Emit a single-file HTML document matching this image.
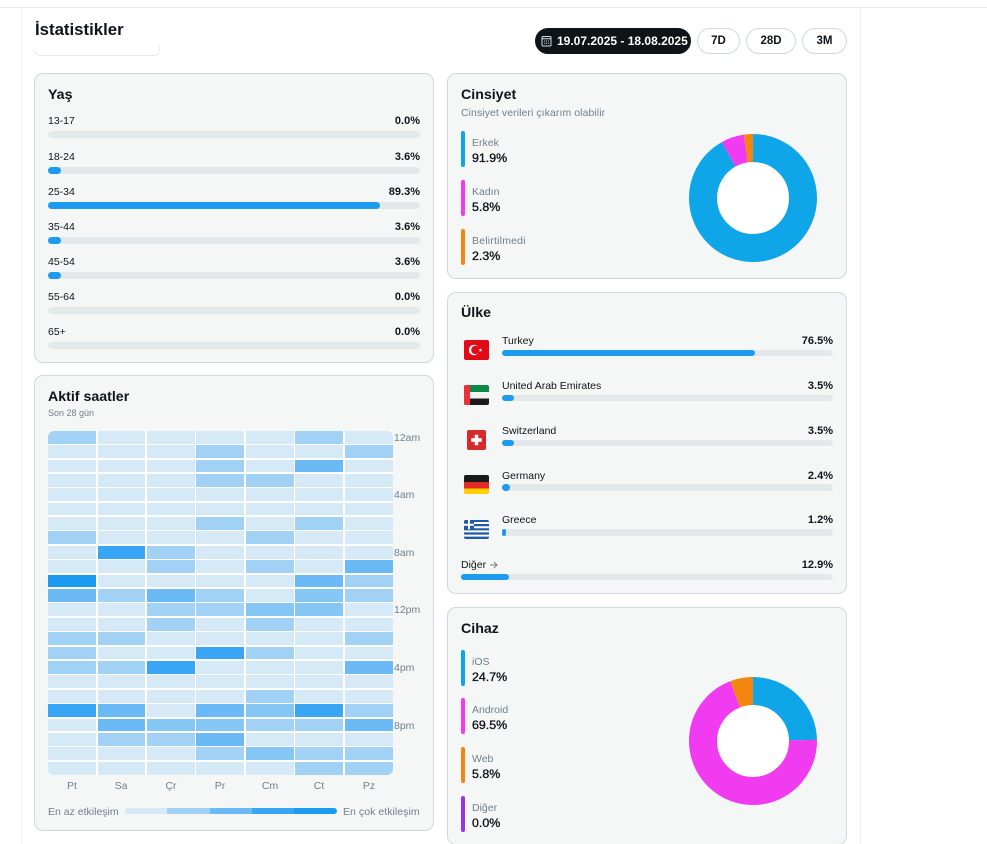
<!DOCTYPE html>
<html><head><meta charset="utf-8"><title>İstatistikler</title>
<style>
html{margin:0;padding:0;background:#fff;width:987px;height:844px;overflow:hidden}
body{margin:0;padding:0;background:#fff;width:987px;height:844px;position:relative;overflow:hidden;font-family:"Liberation Sans",Arial,sans-serif;color:#0f1419}
#w{position:absolute;left:0;top:0;width:987px;height:844px;overflow:hidden}
.a{position:absolute}
.t{position:absolute;white-space:nowrap;line-height:14px;font-size:10.5px;height:14px;margin-top:1px}
.r{text-align:right}
.c{text-align:center}
.card{position:absolute;box-sizing:border-box;background:#f5f7f7;border:1px solid #cfd9de;border-radius:9px}
.h{font-size:14.2px;font-weight:bold;line-height:18px;height:18px;color:#0f1419;margin-top:0}
.g{color:#6f7f8b}
.b{font-weight:bold;font-size:11px}
.v{font-size:12.4px;font-weight:normal;-webkit-text-stroke:.35px #0f1419}
.tr{position:absolute;height:7px;border-radius:4px;background:#e3e8eb}
.fl{position:absolute;left:0;top:0;height:7px;border-radius:4px;background:#1d9bf0}
.lg{position:absolute;left:461px;width:4px;height:36px;border-radius:2px}
.pill{position:absolute;box-sizing:border-box;top:28px;height:26px;border:1px solid #cfd9de;border-radius:13px;text-align:center;font-size:11.5px;font-weight:bold;line-height:24px;background:#fff}
</style></head>
<body><div id="w">
<div class="a" style="left:0;top:7px;width:987px;height:1px;background:#e6e9eb"></div>
<div class="a" style="left:21px;top:8px;width:1px;height:836px;background:#eff3f4"></div>
<div class="a" style="left:860px;top:8px;width:1px;height:836px;background:#eff3f4"></div>

<div class="t b" style="left:35px;top:19px;font-size:16.8px;line-height:20px;height:20px">İstatistikler</div>
<div class="a" style="left:34px;top:46px;width:126px;height:10px;box-sizing:border-box;border:1px solid #e6e9eb;border-top:0;border-radius:0 0 6px 6px"></div>
<div class="a" style="left:30px;top:40px;width:108px;height:10px;background:#fff;filter:blur(2px)"></div>

<div class="pill" style="left:535px;width:156px;background:#0f1419;border-color:#0f1419;color:#fff;text-align:left;padding-left:21px;white-space:nowrap;font-size:12px">19.07.2025 - 18.08.2025</div>
<svg class="a" style="left:541px;top:35px" width="11" height="12" viewBox="0 0 11 12" fill="none" stroke="#d8dde0" stroke-width="1"><rect x="1" y="1.5" width="9" height="9.5" rx="1"/><path d="M1 3.8h9M3.2 6h1M5 6h1M6.9 6h1M3.2 8.2h1M5 8.2h1M6.9 8.2h1"/></svg>
<div class="pill" style="left:697px;width:43px">7D</div>
<div class="pill" style="left:746px;width:50px">28D</div>
<div class="pill" style="left:802px;width:45px">3M</div>

<!-- Yaş -->
<div class="card" style="left:34px;top:73px;width:400px;height:290px"></div>
<div class="t h" style="left:48px;top:86px">Yaş</div>
<div class="t" style="left:48px;top:113px">13-17</div><div class="t r b" style="right:567px;top:113px">0.0%</div>
<div class="tr" style="left:48px;top:131px;width:372px"></div>
<div class="t" style="left:48px;top:149px">18-24</div><div class="t r b" style="right:567px;top:149px">3.6%</div>
<div class="tr" style="left:48px;top:167px;width:372px"><div class="fl" style="width:13px"></div></div>
<div class="t" style="left:48px;top:184px">25-34</div><div class="t r b" style="right:567px;top:184px">89.3%</div>
<div class="tr" style="left:48px;top:202px;width:372px"><div class="fl" style="width:332px"></div></div>
<div class="t" style="left:48px;top:219px">35-44</div><div class="t r b" style="right:567px;top:219px">3.6%</div>
<div class="tr" style="left:48px;top:237px;width:372px"><div class="fl" style="width:13px"></div></div>
<div class="t" style="left:48px;top:254px">45-54</div><div class="t r b" style="right:567px;top:254px">3.6%</div>
<div class="tr" style="left:48px;top:272px;width:372px"><div class="fl" style="width:13px"></div></div>
<div class="t" style="left:48px;top:289px">55-64</div><div class="t r b" style="right:567px;top:289px">0.0%</div>
<div class="tr" style="left:48px;top:307px;width:372px"></div>
<div class="t" style="left:48px;top:324px">65+</div><div class="t r b" style="right:567px;top:324px">0.0%</div>
<div class="tr" style="left:48px;top:342px;width:372px"></div>

<!-- Aktif saatler -->
<div class="card" style="left:34px;top:375px;width:400px;height:456px"></div>
<div class="t h" style="left:48px;top:388px">Aktif saatler</div>
<div class="t g" style="left:48px;top:405px;font-size:9px">Son 28 gün</div>
<svg class="a" style="left:48px;top:431px" width="345" height="344" viewBox="48 431 345 344">
<defs><clipPath id="cp"><rect x="48" y="431" width="345" height="344" rx="6"/></clipPath></defs>
<style>.l0{fill:#d5e9f7}.l1{fill:#a1d2f6}.l2{fill:#84c7f5}.l3{fill:#6cbaf5}.l4{fill:#38a6f4}.l5{fill:#1d9bf0}</style>
<g clip-path="url(#cp)">
<rect x="48" y="431" width="345" height="344" fill="#fff"/>
<g transform="translate(0,431)"><rect class="l1" x="48" width="48" height="13"/><rect class="l0" x="98" width="47" height="13"/><rect class="l0" x="147" width="48" height="13"/><rect class="l0" x="196" width="48" height="13"/><rect class="l0" x="246" width="48" height="13"/><rect class="l1" x="295" width="48" height="13"/><rect class="l0" x="345" width="48" height="13"/></g>
<g transform="translate(0,445)"><rect class="l0" x="48" width="48" height="13"/><rect class="l0" x="98" width="47" height="13"/><rect class="l0" x="147" width="48" height="13"/><rect class="l1" x="196" width="48" height="13"/><rect class="l0" x="246" width="48" height="13"/><rect class="l0" x="295" width="48" height="13"/><rect class="l1" x="345" width="48" height="13"/></g>
<g transform="translate(0,460)"><rect class="l0" x="48" width="48" height="12"/><rect class="l0" x="98" width="47" height="12"/><rect class="l0" x="147" width="48" height="12"/><rect class="l1" x="196" width="48" height="12"/><rect class="l0" x="246" width="48" height="12"/><rect class="l3" x="295" width="48" height="12"/><rect class="l0" x="345" width="48" height="12"/></g>
<g transform="translate(0,474)"><rect class="l0" x="48" width="48" height="13"/><rect class="l0" x="98" width="47" height="13"/><rect class="l0" x="147" width="48" height="13"/><rect class="l1" x="196" width="48" height="13"/><rect class="l1" x="246" width="48" height="13"/><rect class="l0" x="295" width="48" height="13"/><rect class="l0" x="345" width="48" height="13"/></g>
<g transform="translate(0,488)"><rect class="l0" x="48" width="48" height="13"/><rect class="l0" x="98" width="47" height="13"/><rect class="l0" x="147" width="48" height="13"/><rect class="l0" x="196" width="48" height="13"/><rect class="l0" x="246" width="48" height="13"/><rect class="l0" x="295" width="48" height="13"/><rect class="l0" x="345" width="48" height="13"/></g>
<g transform="translate(0,503)"><rect class="l0" x="48" width="48" height="12"/><rect class="l0" x="98" width="47" height="12"/><rect class="l0" x="147" width="48" height="12"/><rect class="l0" x="196" width="48" height="12"/><rect class="l0" x="246" width="48" height="12"/><rect class="l0" x="295" width="48" height="12"/><rect class="l0" x="345" width="48" height="12"/></g>
<g transform="translate(0,517)"><rect class="l0" x="48" width="48" height="13"/><rect class="l0" x="98" width="47" height="13"/><rect class="l0" x="147" width="48" height="13"/><rect class="l1" x="196" width="48" height="13"/><rect class="l0" x="246" width="48" height="13"/><rect class="l1" x="295" width="48" height="13"/><rect class="l0" x="345" width="48" height="13"/></g>
<g transform="translate(0,531)"><rect class="l1" x="48" width="48" height="13"/><rect class="l0" x="98" width="47" height="13"/><rect class="l0" x="147" width="48" height="13"/><rect class="l0" x="196" width="48" height="13"/><rect class="l1" x="246" width="48" height="13"/><rect class="l0" x="295" width="48" height="13"/><rect class="l0" x="345" width="48" height="13"/></g>
<g transform="translate(0,546)"><rect class="l0" x="48" width="48" height="13"/><rect class="l4" x="98" width="47" height="13"/><rect class="l1" x="147" width="48" height="13"/><rect class="l0" x="196" width="48" height="13"/><rect class="l0" x="246" width="48" height="13"/><rect class="l0" x="295" width="48" height="13"/><rect class="l0" x="345" width="48" height="13"/></g>
<g transform="translate(0,560)"><rect class="l0" x="48" width="48" height="13"/><rect class="l0" x="98" width="47" height="13"/><rect class="l1" x="147" width="48" height="13"/><rect class="l0" x="196" width="48" height="13"/><rect class="l1" x="246" width="48" height="13"/><rect class="l0" x="295" width="48" height="13"/><rect class="l3" x="345" width="48" height="13"/></g>
<g transform="translate(0,575)"><rect class="l5" x="48" width="48" height="12"/><rect class="l0" x="98" width="47" height="12"/><rect class="l0" x="147" width="48" height="12"/><rect class="l0" x="196" width="48" height="12"/><rect class="l0" x="246" width="48" height="12"/><rect class="l3" x="295" width="48" height="12"/><rect class="l1" x="345" width="48" height="12"/></g>
<g transform="translate(0,589)"><rect class="l3" x="48" width="48" height="13"/><rect class="l1" x="98" width="47" height="13"/><rect class="l3" x="147" width="48" height="13"/><rect class="l1" x="196" width="48" height="13"/><rect class="l0" x="246" width="48" height="13"/><rect class="l2" x="295" width="48" height="13"/><rect class="l1" x="345" width="48" height="13"/></g>
<g transform="translate(0,603)"><rect class="l0" x="48" width="48" height="13"/><rect class="l0" x="98" width="47" height="13"/><rect class="l1" x="147" width="48" height="13"/><rect class="l1" x="196" width="48" height="13"/><rect class="l2" x="246" width="48" height="13"/><rect class="l2" x="295" width="48" height="13"/><rect class="l0" x="345" width="48" height="13"/></g>
<g transform="translate(0,618)"><rect class="l0" x="48" width="48" height="13"/><rect class="l0" x="98" width="47" height="13"/><rect class="l1" x="147" width="48" height="13"/><rect class="l0" x="196" width="48" height="13"/><rect class="l1" x="246" width="48" height="13"/><rect class="l0" x="295" width="48" height="13"/><rect class="l0" x="345" width="48" height="13"/></g>
<g transform="translate(0,632)"><rect class="l1" x="48" width="48" height="13"/><rect class="l1" x="98" width="47" height="13"/><rect class="l0" x="147" width="48" height="13"/><rect class="l0" x="196" width="48" height="13"/><rect class="l0" x="246" width="48" height="13"/><rect class="l0" x="295" width="48" height="13"/><rect class="l1" x="345" width="48" height="13"/></g>
<g transform="translate(0,647)"><rect class="l1" x="48" width="48" height="12"/><rect class="l0" x="98" width="47" height="12"/><rect class="l0" x="147" width="48" height="12"/><rect class="l4" x="196" width="48" height="12"/><rect class="l1" x="246" width="48" height="12"/><rect class="l0" x="295" width="48" height="12"/><rect class="l0" x="345" width="48" height="12"/></g>
<g transform="translate(0,661)"><rect class="l1" x="48" width="48" height="13"/><rect class="l1" x="98" width="47" height="13"/><rect class="l4" x="147" width="48" height="13"/><rect class="l0" x="196" width="48" height="13"/><rect class="l0" x="246" width="48" height="13"/><rect class="l0" x="295" width="48" height="13"/><rect class="l3" x="345" width="48" height="13"/></g>
<g transform="translate(0,675)"><rect class="l0" x="48" width="48" height="13"/><rect class="l0" x="98" width="47" height="13"/><rect class="l0" x="147" width="48" height="13"/><rect class="l0" x="196" width="48" height="13"/><rect class="l0" x="246" width="48" height="13"/><rect class="l0" x="295" width="48" height="13"/><rect class="l0" x="345" width="48" height="13"/></g>
<g transform="translate(0,690)"><rect class="l0" x="48" width="48" height="13"/><rect class="l0" x="98" width="47" height="13"/><rect class="l0" x="147" width="48" height="13"/><rect class="l0" x="196" width="48" height="13"/><rect class="l1" x="246" width="48" height="13"/><rect class="l0" x="295" width="48" height="13"/><rect class="l0" x="345" width="48" height="13"/></g>
<g transform="translate(0,704)"><rect class="l4" x="48" width="48" height="13"/><rect class="l3" x="98" width="47" height="13"/><rect class="l0" x="147" width="48" height="13"/><rect class="l3" x="196" width="48" height="13"/><rect class="l2" x="246" width="48" height="13"/><rect class="l4" x="295" width="48" height="13"/><rect class="l1" x="345" width="48" height="13"/></g>
<g transform="translate(0,719)"><rect class="l0" x="48" width="48" height="12"/><rect class="l3" x="98" width="47" height="12"/><rect class="l2" x="147" width="48" height="12"/><rect class="l2" x="196" width="48" height="12"/><rect class="l1" x="246" width="48" height="12"/><rect class="l1" x="295" width="48" height="12"/><rect class="l3" x="345" width="48" height="12"/></g>
<g transform="translate(0,733)"><rect class="l0" x="48" width="48" height="13"/><rect class="l1" x="98" width="47" height="13"/><rect class="l1" x="147" width="48" height="13"/><rect class="l3" x="196" width="48" height="13"/><rect class="l0" x="246" width="48" height="13"/><rect class="l0" x="295" width="48" height="13"/><rect class="l0" x="345" width="48" height="13"/></g>
<g transform="translate(0,747)"><rect class="l0" x="48" width="48" height="13"/><rect class="l0" x="98" width="47" height="13"/><rect class="l0" x="147" width="48" height="13"/><rect class="l1" x="196" width="48" height="13"/><rect class="l2" x="246" width="48" height="13"/><rect class="l1" x="295" width="48" height="13"/><rect class="l1" x="345" width="48" height="13"/></g>
<g transform="translate(0,762)"><rect class="l0" x="48" width="48" height="13"/><rect class="l0" x="98" width="47" height="13"/><rect class="l0" x="147" width="48" height="13"/><rect class="l0" x="196" width="48" height="13"/><rect class="l0" x="246" width="48" height="13"/><rect class="l1" x="295" width="48" height="13"/><rect class="l1" x="345" width="48" height="13"/></g>
</g></svg>
<div class="t g" style="left:394px;top:430px">12am</div>
<div class="t g" style="left:394px;top:487px">4am</div>
<div class="t g" style="left:394px;top:545px">8am</div>
<div class="t g" style="left:394px;top:602px">12pm</div>
<div class="t g" style="left:394px;top:660px">4pm</div>
<div class="t g" style="left:394px;top:718px">8pm</div>
<div class="t g c" style="left:52px;width:40px;top:778px">Pt</div>
<div class="t g c" style="left:101px;width:40px;top:778px">Sa</div>
<div class="t g c" style="left:151px;width:40px;top:778px">Çr</div>
<div class="t g c" style="left:200px;width:40px;top:778px">Pr</div>
<div class="t g c" style="left:250px;width:40px;top:778px">Cm</div>
<div class="t g c" style="left:299px;width:40px;top:778px">Ct</div>
<div class="t g c" style="left:349px;width:40px;top:778px">Pz</div>
<div class="t g" style="left:48px;top:804px">En az etkileşim</div>
<div class="t g" style="left:343px;top:804px;letter-spacing:.05px">En çok etkileşim</div>
<div class="a" style="left:125px;top:808px;width:212px;height:6px;border-radius:3px;background:linear-gradient(90deg,#d5e9f7 0 42px,#a1d2f6 42px 85px,#6cbaf5 85px 127px,#38a6f4 127px 169px,#1d9bf0 169px)"></div>

<!-- Cinsiyet -->
<div class="card" style="left:447px;top:73px;width:400px;height:206px"></div>
<div class="t h" style="left:461px;top:86px">Cinsiyet</div>
<div class="t g" style="left:461px;top:105px;letter-spacing:.07px">Cinsiyet verileri çıkarım olabilir</div>
<div class="lg" style="top:131px;background:#0ea5e9"></div>
<div class="t g" style="left:472px;top:135px">Erkek</div><div class="t v" style="left:472px;top:150px">91.9%</div>
<div class="lg" style="top:180px;background:#f03bf0"></div>
<div class="t g" style="left:472px;top:184px">Kadın</div><div class="t v" style="left:472px;top:199px">5.8%</div>
<div class="lg" style="top:229px;background:#f2860f"></div>
<div class="t g" style="left:472px;top:233px;letter-spacing:.2px">Belirtilmedi</div><div class="t v" style="left:472px;top:248px">2.3%</div>
<svg class="a" style="left:689px;top:134px" width="128" height="128" viewBox="0 0 128 128" fill="none">
<circle cx="64" cy="64" r="36" fill="#fff"/>
<g transform="rotate(-90 64 64)" stroke-width="28">
<circle cx="64" cy="64" r="50" pathLength="100" stroke="#0ea5e9" stroke-dasharray="91.9 100"/>
<circle cx="64" cy="64" r="50" pathLength="100" stroke="#f03bf0" stroke-dasharray="5.8 100" stroke-dashoffset="-91.9"/>
<circle cx="64" cy="64" r="50" pathLength="100" stroke="#f2860f" stroke-dasharray="2.3 100" stroke-dashoffset="-97.7"/>
</g></svg>

<!-- Ülke -->
<div class="card" style="left:447px;top:292px;width:400px;height:302px"></div>
<div class="t h" style="left:461px;top:304px">Ülke</div>
<svg class="a" style="left:464px;top:340px" width="25" height="20" viewBox="0 0 25 20"><rect width="25" height="20" rx="2" fill="#e30a17"/><circle cx="10" cy="10" r="5.2" fill="#fff"/><circle cx="11.4" cy="10" r="4.2" fill="#e30a17"/><path d="M16.5 8.2l.5 1.3 1.4 0-1.1.9.4 1.4-1.2-.8-1.2.8.4-1.4-1.1-.9 1.4 0z" fill="#fff"/></svg>
<div class="t" style="left:502px;top:333px">Turkey</div><div class="t r b" style="right:154px;top:333px">76.5%</div>
<div class="tr" style="left:502px;top:350px;width:331px;height:6px"><div class="fl" style="width:253px;height:6px"></div></div>
<svg class="a" style="left:464px;top:385px" width="25" height="20" viewBox="0 0 25 20"><defs><clipPath id="f2"><rect width="25" height="20" rx="2"/></clipPath></defs><g clip-path="url(#f2)"><rect width="25" height="7" fill="#0b8a45"/><rect y="7" width="25" height="6.5" fill="#f2f2f2"/><rect y="13.5" width="25" height="6.5" fill="#1a1a1a"/><rect width="6" height="20" fill="#ee2f3a"/></g></svg>
<div class="t" style="left:502px;top:378px">United Arab Emirates</div><div class="t r b" style="right:154px;top:378px">3.5%</div>
<div class="tr" style="left:502px;top:395px;width:331px;height:6px"><div class="fl" style="width:12px;height:6px"></div></div>
<svg class="a" style="left:467px;top:430px" width="19" height="20" viewBox="0 0 19 20"><rect width="19" height="20" rx="2" fill="#d52b2b"/><path d="M7.7 4.8h3.6v3.4h3.5v3.6h-3.5v3.4H7.7v-3.4H4.2V8.2h3.5z" fill="#fff"/></svg>
<div class="t" style="left:502px;top:423px">Switzerland</div><div class="t r b" style="right:154px;top:423px">3.5%</div>
<div class="tr" style="left:502px;top:440px;width:331px;height:6px"><div class="fl" style="width:12px;height:6px"></div></div>
<svg class="a" style="left:464px;top:475px" width="25" height="19" viewBox="0 0 25 19"><defs><clipPath id="f4"><rect width="25" height="19" rx="2"/></clipPath></defs><g clip-path="url(#f4)"><rect width="25" height="7" fill="#1a1a1a"/><rect y="7" width="25" height="6.5" fill="#e52a2a"/><rect y="13.5" width="25" height="5.5" fill="#ffcf00"/></g></svg>
<div class="t" style="left:502px;top:468px">Germany</div><div class="t r b" style="right:154px;top:468px">2.4%</div>
<div class="tr" style="left:502px;top:484px;width:331px;height:7px"><div class="fl" style="width:8px"></div></div>
<svg class="a" style="left:464px;top:520px" width="25" height="19" viewBox="0 0 25 19"><defs><clipPath id="f5"><rect width="25" height="19" rx="2"/></clipPath></defs><g clip-path="url(#f5)"><rect width="25" height="19" fill="#1e5aa8"/><path d="M0 3h25M0 7.2h25M0 11.4h25M0 15.6h25" stroke="#fff" stroke-width="2"/><rect width="10" height="9.4" fill="#1e5aa8"/><path d="M5 0v9.4M0 4.7h10" stroke="#fff" stroke-width="2"/></g></svg>
<div class="t" style="left:502px;top:512px">Greece</div><div class="t r b" style="right:154px;top:512px">1.2%</div>
<div class="tr" style="left:502px;top:529px;width:331px;height:7px"><div class="fl" style="width:4px"></div></div>
<div class="t" style="left:461px;top:557px">Diğer</div>
<svg class="a" style="left:489px;top:561px" width="9" height="8" viewBox="0 0 9 8" fill="none" stroke="#6f7f8b" stroke-width="1"><path d="M1 4h7M5 1l3 3-3 3"/></svg>
<div class="t r b" style="right:154px;top:557px">12.9%</div>
<div class="tr" style="left:461px;top:574px;width:372px;height:6px"><div class="fl" style="width:48px;height:6px"></div></div>

<!-- Cihaz -->
<div class="card" style="left:447px;top:607px;width:400px;height:238px"></div>
<div class="t h" style="left:461px;top:620px">Cihaz</div>
<div class="lg" style="top:650px;background:#0ea5e9"></div>
<div class="t g" style="left:472px;top:654px">iOS</div><div class="t v" style="left:472px;top:669px">24.7%</div>
<div class="lg" style="top:698px;background:#f03bf0"></div>
<div class="t g" style="left:472px;top:702px">Android</div><div class="t v" style="left:472px;top:717px">69.5%</div>
<div class="lg" style="top:747px;background:#f2860f"></div>
<div class="t g" style="left:472px;top:751px">Web</div><div class="t v" style="left:472px;top:766px">5.8%</div>
<div class="lg" style="top:796px;background:#9333ea"></div>
<div class="t g" style="left:472px;top:800px">Diğer</div><div class="t v" style="left:472px;top:815px">0.0%</div>
<svg class="a" style="left:689px;top:677px" width="128" height="128" viewBox="0 0 128 128" fill="none">
<circle cx="64" cy="64" r="36" fill="#fff"/>
<g transform="rotate(-90 64 64)" stroke-width="28">
<circle cx="64" cy="64" r="50" pathLength="100" stroke="#0ea5e9" stroke-dasharray="24.7 100"/>
<circle cx="64" cy="64" r="50" pathLength="100" stroke="#f03bf0" stroke-dasharray="69.5 100" stroke-dashoffset="-24.7"/>
<circle cx="64" cy="64" r="50" pathLength="100" stroke="#f2860f" stroke-dasharray="5.8 100" stroke-dashoffset="-94.2"/>
</g></svg>
</div></body></html>
